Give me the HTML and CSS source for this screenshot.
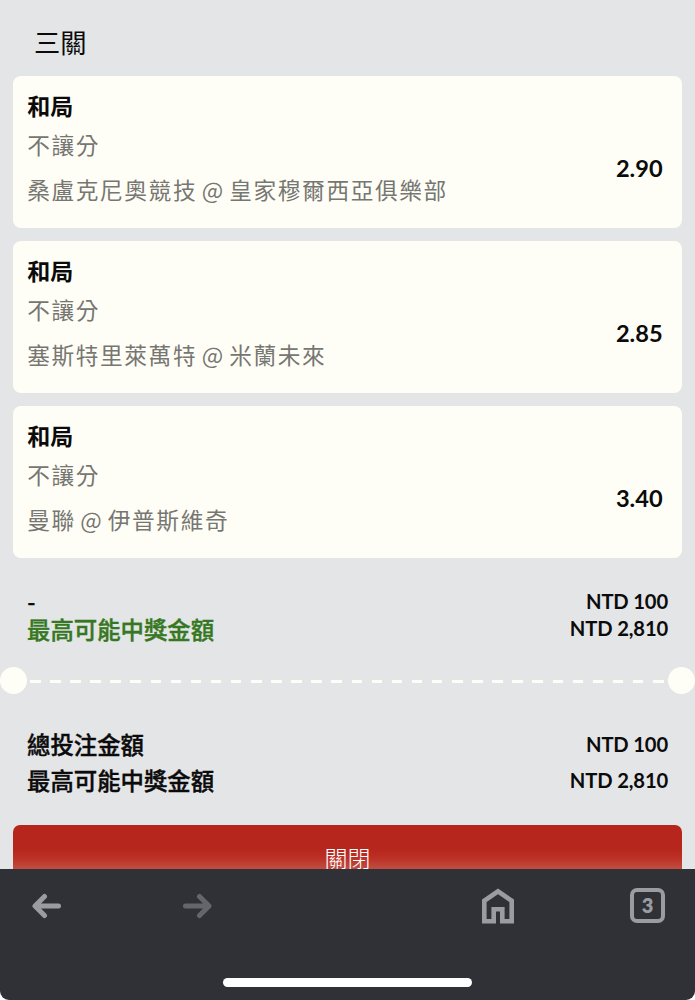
FILE: index.html
```
<!DOCTYPE html>
<html lang="zh-Hant">

<head>
    <meta charset="UTF-8">
    <meta name="viewport" content="width=device-width, initial-scale=1.0">
    <title>三關</title>

    <link rel="stylesheet" href="styles.css">
</head>

<body>
    <div class="main">

        <div class="betSlip">
            <h1>三關</h1>

            <!-- 投注項目 -->
            <div class="card">
                <div class="info">
                    <div class="pick">和局</div>
                    <div class="type">不讓分</div>
                    <div class="teams">桑盧克尼奧競技 @ 皇家穆爾西亞俱樂部</div>
                </div>
                <div class="odds">2.90</div>
            </div>

            <div class="card">
                <div class="info">
                    <div class="pick">和局</div>
                    <div class="type">不讓分</div>
                    <div class="teams">塞斯特里萊萬特 @ 米蘭未來</div>
                </div>
                <div class="odds">2.85</div>
            </div>

            <div class="card">
                <div class="info">
                    <div class="pick">和局</div>
                    <div class="type">不讓分</div>
                    <div class="teams">曼聯 @ 伊普斯維奇</div>
                </div>
                <div class="odds">3.40</div>
            </div>

            <!-- 單注金額 -->
            <div class="summary">
                <div class="row">
                    <span class="name">-</span>
                    <span class="money">NTD 100</span>
                </div>
                <div class="row">
                    <span class="name green">最高可能中獎金額</span>
                    <span class="money">NTD 2,810</span>
                </div>
            </div>

            <!-- 票券虛線 -->
            <div class="divider">
                <div class="circle"></div>
                <div class="dash"></div>
                <div class="circle"></div>
            </div>

            <!-- 總金額 -->
            <div class="summary total">
                <div class="row">
                    <span class="name">總投注金額</span>
                    <span class="money">NTD 100</span>
                </div>
                <div class="row">
                    <span class="name">最高可能中獎金額</span>
                    <span class="money">NTD 2,810</span>
                </div>
            </div>

            <div class="btn">關閉</div>
        </div>

        <!-- 瀏覽器工具列 -->
        <div class="toolbar">
            <div class="icons">
                <svg class="back" width="30" height="26" viewBox="0 0 30 26">
                    <path d="M26.5 13H4M12.5 3.5L3 13L12.5 22.5" />
                </svg>
                <svg class="forward" width="30" height="26" viewBox="0 0 30 26">
                    <path d="M3.5 13H26M17.5 3.5L27 13L17.5 22.5" />
                </svg>
                <svg class="home" width="32" height="36" viewBox="0 0 32 36">
                    <path d="M2.3 33.2V12.8L16 3.3L29.7 12.8V33.2H20.3V21.3H11.7V33.2Z" />
                </svg>
                <div class="tabs">3</div>
            </div>
            <div class="homeBar"></div>
        </div>
    </div>
</body>

</html>
```
FILE: styles.css
```
* {
    box-sizing: border-box;
}

body {
    margin: 0;
    background-color: white;
    font-family: Lato, "Noto Sans CJK TC", sans-serif;
    color: #0b0b0b;
}

h1 {
    margin: 0;
    padding: 22px 0 0 34px;
    height: 76px;
    font-size: 26.3px;
    font-weight: 400;
    line-height: 42px;
}

.main {
    width: 100%;
    height: 1000px;
    overflow: hidden;
    display: flex;
    flex-direction: column;
}

.betSlip {
    height: 869px;
    overflow: hidden;
    background-color: #e4e5e7;
}

.card {
    height: 151.5px;
    margin: 0 13.4px 13.5px 13.2px;
    padding: 10px 19px 0 14px;
    border-radius: 8px;
    background-color: #fffef6;
    display: flex;
    justify-content: space-between;
}

.pick {
    font-size: 23px;
    font-weight: 700;
    line-height: 40px;
}

.type,
.teams {
    font-family: "Noto Sans CJK TC", sans-serif;
    font-size: 22.7px;
    font-weight: 400;
    letter-spacing: 1.6px;
    word-spacing: -2.2px;
    line-height: 39px;
    color: #767672;
}

.type {
    margin-top: -1px;
}

.teams {
    margin-top: 6px;
}

.odds {
    padding-top: 62px;
    font-size: 23.6px;
    font-weight: 700;
    line-height: 40px;
}

.summary {
    height: 83px;
    padding: 17px 27px 0;
}

.row {
    display: flex;
    justify-content: space-between;
    line-height: 27px;
}

.name {
    padding-top: 1px;
    font-size: 23.4px;
    font-weight: 500;
    -webkit-text-stroke: 0.4px;
}

.money {
    font-size: 20.2px;
    font-weight: 700;
    letter-spacing: -0.15px;
}

.green {
    padding-top: 2px;
    color: #36781f;
}

.summary .row {
    height: 27px;
}

.divider {
    height: 27px;
    margin-top: 13px;
    display: flex;
    align-items: center;
}

.circle {
    width: 27px;
    height: 27px;
    border-radius: 50%;
    background-color: #fffef6;
}

.dash {
    flex: 1;
    height: 3px;
    margin: 2px 3px 0;
    background: repeating-linear-gradient(to right, #fffef6 0 10.5px, transparent 10.5px 20.1px);
}

.total {
    height: 130.5px;
    padding-top: 33px;
}

.total .row {
    height: 35.5px;
    line-height: 35.5px;
}

.btn {
    height: 66px;
    margin: 0 13.4px 0 13.2px;
    border-radius: 7px;
    background: linear-gradient(#b6261c 0 24px, #bc3026 33px, #c05045 45px);
    color: white;
    font-size: 23px;
    font-weight: 300;
    line-height: 66px;
    text-align: center;
}

.toolbar {
    height: 131px;
    padding-top: 19px;
    border-radius: 0 0 9px 9px;
    background-color: #303136;
}

.icons {
    height: 36px;
    padding: 0 30px 0 32px;
    display: flex;
    align-items: center;
}

.icons path {
    fill: none;
    stroke: #9b9ca1;
    stroke-width: 5;
    stroke-linecap: round;
    stroke-linejoin: round;
}

.icons .forward path {
    stroke: #65666a;
}

.icons .home path {
    stroke-width: 4.6;
    stroke-linecap: butt;
    stroke-linejoin: miter;
}

.forward {
    margin-left: 120px;
}

.home {
    margin-left: auto;
}

.tabs {
    width: 35px;
    height: 35px;
    margin: -1px 0 0 116px;
    border: 4px solid #9b9ca1;
    border-radius: 7px;
    color: #9b9ca1;
    font-size: 20px;
    font-weight: 800;
    line-height: 27px;
    text-align: center;
}

.homeBar {
    width: 249px;
    height: 9px;
    margin: 54px auto 0;
    border-radius: 5px;
    background-color: white;
}
```
